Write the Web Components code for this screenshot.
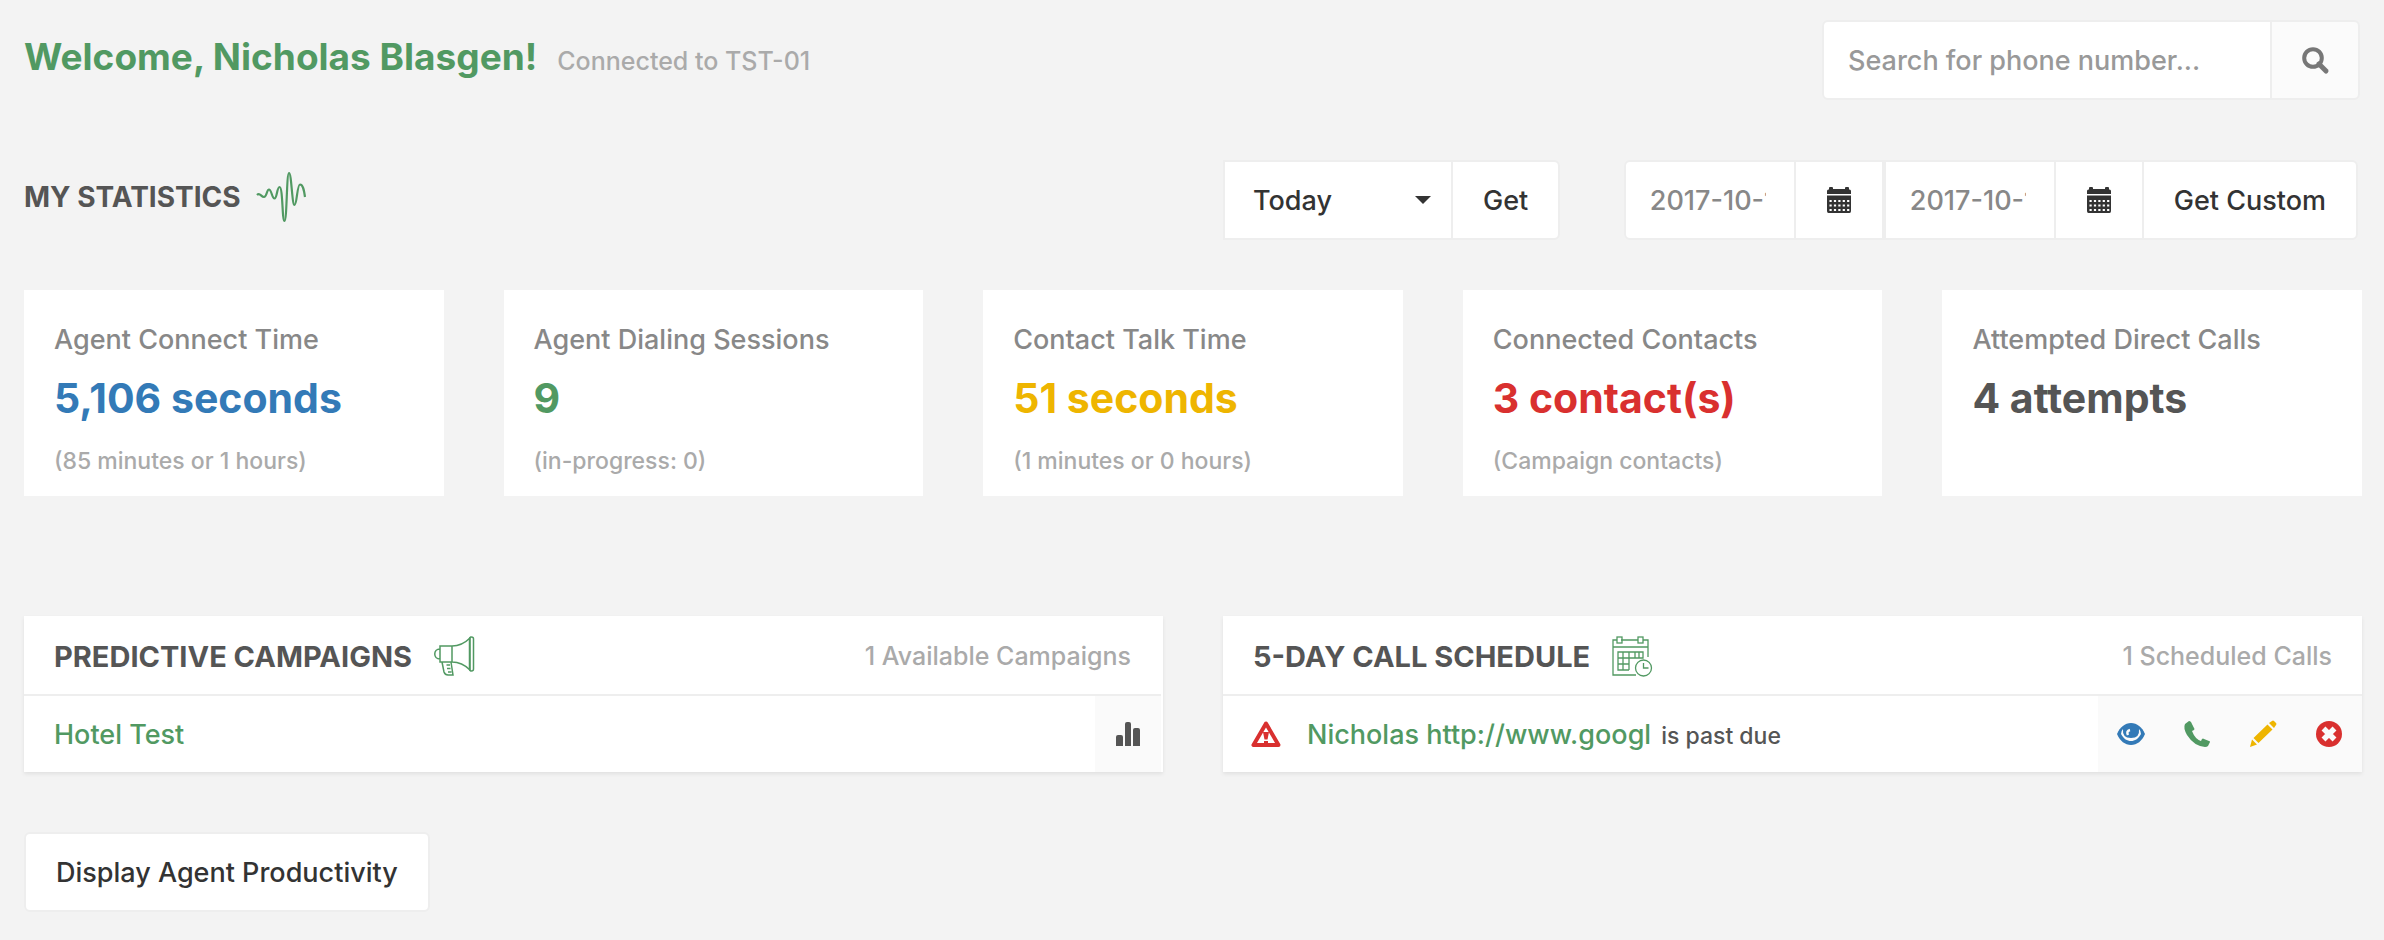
<!DOCTYPE html>
<html lang="en">
<head>
  <meta charset="utf-8">
  <meta name="viewport" content="width=device-width, initial-scale=1">
  <title>Agent Dashboard</title>
  <style>
    body {
      margin: 0;
      background: #f3f3f3;
      color: #555;
      font-family: Inter, "Open Sans", sans-serif;
      font-size: 27px;
      font-weight: 500;
      --green: #519962;
      --blue: #337ab7;
      --yellow: #eeb500;
      --red: #d9302f;
      --muted: #aaa;
      --line: #eee;
    }
  </style>
</head>
<body>
  <agent-dashboard></agent-dashboard>

  <script>
    const icons = {
      pulse: {
        box: '0 0 50 50',
        body: '<path d="M0 23C3 20 4 25 7 25S9.500 17.500 12 17.500 15 26.500 17.500 26.500 20 15 22.500 15C26 15 25 49 27.500 49S29.500 1 32 1 35 33 37.500 33 40 12.500 43 12.500C46 12.500 47 18 48 25" fill="none" stroke="currentColor" stroke-width="2.200"/>'
      },
      megaphone: {
        box: '0 0 40 40',
        body: '<g fill="none" stroke="currentColor" stroke-width="1.500"><path d="M6 10h12v16H6zM6 13C-1 13-1 23 6 23M18 10c7 0 14-4 18-8v32c-4-4-10-8-18-8M8 26l2 10q1 3 4 3h5l-2-13M12.500 29H16M13 32.500h3.500M14 36h3.500"/><rect x="35.500" y="1" width="4" height="34" rx="2"/></g>'
      },
      schedule: {
        box: '0 0 40 40',
        body: '<g fill="none" stroke="currentColor" stroke-width="1.300"><path d="M5 4H1v35h23M9 4h17M31 4h5v17M1 11h35M6 16h25v6H6zM11 16v18M17 16v18M23 16v6M27 16v6M6 22v12h11M6 28h11"/><rect x="5" y="1" width="5" height="6"/><rect x="26" y="1" width="5" height="6"/><circle cx="31.500" cy="32" r="8"/><path d="M31.500 27v5h5"/></g>'
      },
      search: {
        box: '0 0 26 26',
        body: '<g fill="none" stroke="currentColor"><circle cx="11" cy="11" r="8.800" stroke-width="4"/><path d="M17 17l7 7" stroke-width="5" stroke-linecap="round"/></g>'
      },
      calendar: {
        box: '0 0 26 26',
        body: '<path fill="currentColor" d="M1 7V4q0-1.500 1.500-1.500H3V1q0-1 1-1h2q1 0 1 1v1h12V1q0-1 1-1h2q1 0 1 1v1.500h.5Q25 2.500 25 4v3zM1 8.500h24V24q0 2-1.500 2h-21Q1 26 1 24z"/><path stroke="#fff" stroke-width="2.200" stroke-dasharray="2.200 2.200" d="M3.500 14h20M3.500 18.500h20M3.500 23h20"/>'
      },
      caret: {
        box: '0 0 16 8',
        body: '<path fill="currentColor" d="M0 0h16L8 8z"/>'
      },
      bars: {
        box: '0 0 24 24',
        body: '<path fill="currentColor" d="M0 24V15q0-2 2-2h3q2 0 2 2v9zM9 24V2q0-2 2-2h2q2 0 2 2v22zM17 24V8q0-2 2-2h3q2 0 2 2v16z"/>'
      },
      warning: {
        box: '0 0 30 26',
        body: '<path fill="none" stroke="currentColor" stroke-width="4" stroke-linejoin="round" d="M15 2.500L2.500 24h25z"/><path fill="currentColor" d="M12 11h6l-1.500 7.500h-3zM13 20h4v3h-4z"/>'
      },
      eye: {
        box: '0 0 28 22',
        body: '<path fill="currentColor" d="M14 0c6 0 11 4 14 11-3 7-8 11-14 11S3 18 0 11C3 4 8 0 14 0z"/><path fill="#fafafa" d="M6 6q-2 2-2 5c3 5 6 7 10 7s7-2 10-7q0-3-2-5 1 9-8 9T6 6z"/><path d="M13 7q-4 1-2 5" fill="none" stroke="#fafafa" stroke-width="2.500"/>'
      },
      phone: {
        box: '0 0 26 26',
        body: '<path fill="currentColor" d="M5 0L1 3q-2 4 2 11 7 11 18 12 2 0 3-1l2-4q0-1-1-1l-5-2q-1-1-2 0l-1 2q-6-2-9-10l2-1q1-1 0-2L7 1Q6 0 5 0z"/>'
      },
      pencil: {
        box: '0 0 26 26',
        body: '<path fill="currentColor" d="M22 0q1-1 2 0l2 2q1 1 0 2l-2 3-5-5zM17.500 3.500l5 5L8.500 22l-5-5zM2 18.500L7 23.500 0 26z"/>'
      },
      remove: {
        box: '0 0 26 26',
        body: '<circle cx="13" cy="13" r="13" fill="currentColor"/><path stroke="#fafafa" stroke-width="5.500" d="M7.500 7.500l11 11M18.500 7.500l-11 11"/>'
      }
    };

    class AppIcon extends HTMLElement {
      constructor() {
        super();
        this.attachShadow({ mode: 'open' });
      }

      connectedCallback() {
        const icon = icons[this.getAttribute('name')];
        const [, , width, height] = icon.box.split(' ');
        this.shadowRoot.innerHTML = `
          <style>
            :host { display: inline-flex; flex: none; }
            svg { display: block; overflow: visible; }
          </style>
          <svg viewBox="${icon.box}" width="${width}" height="${height}" aria-hidden="true">${icon.body}</svg>
        `;
      }
    }

    const controlStyles = `
      :host { display: flex; }
      input, select, button {
        box-sizing: border-box;
        height: 80px;
        margin: 0;
        border: 2px solid var(--line);
        border-radius: 0;
        background: #fff;
        color: #333;
        font: inherit;
      }
      button { padding: 0 30px; cursor: pointer; white-space: nowrap; }
      .join { margin-left: -2px; }
      .icon { display: flex; align-items: center; justify-content: center; width: 90px; padding: 0; }
      .first { border-radius: 6px 0 0 6px; }
      .last { border-radius: 0 6px 6px 0; }
    `;

    class PhoneSearch extends HTMLElement {
      constructor() {
        super();
        this.attachShadow({ mode: 'open' });
        this.shadowRoot.innerHTML = `
          <style>
            ${controlStyles}
            input { width: 450px; padding: 0 24px; }
            input::placeholder { color: #999; opacity: 1; }
            button { background: #fbfbfb; color: #777; }
          </style>
          <input class="first" type="search" placeholder="Search for phone number..." aria-label="Search for phone number">
          <button class="icon join last" type="button" aria-label="Search"><app-icon name="search"></app-icon></button>
        `;
      }
    }

    class PeriodPicker extends HTMLElement {
      constructor() {
        super();
        this.attachShadow({ mode: 'open' });
        this.shadowRoot.innerHTML = `
          <style>
            ${controlStyles}
            .select { display: grid; align-items: center; }
            .select > * { grid-area: 1 / 1; }
            select { appearance: none; width: 230px; padding: 0 28px; }
            app-icon { justify-self: end; margin-right: 22px; color: #333; pointer-events: none; }
          </style>
          <div class="select">
            <select aria-label="Period">
              <option>Today</option>
              <option>Yesterday</option>
              <option>This Week</option>
            </select>
            <app-icon name="caret"></app-icon>
          </div>
          <button class="join last" type="button">Get</button>
        `;
      }
    }

    class DateRange extends HTMLElement {
      constructor() {
        super();
        this.attachShadow({ mode: 'open' });
        this.shadowRoot.innerHTML = `
          <style>
            ${controlStyles}
            input { width: 172px; padding: 0 28px 0 24px; color: #888; }
          </style>
          <input class="first" type="text" value="2017-10-17" aria-label="From date">
          <button class="icon join" type="button" aria-label="Pick from date"><app-icon name="calendar"></app-icon></button>
          <input type="text" value="2017-10-17" aria-label="To date">
          <button class="icon join" type="button" aria-label="Pick to date"><app-icon name="calendar"></app-icon></button>
          <button class="join last" type="button">Get Custom</button>
        `;
      }
    }

    class StatCard extends HTMLElement {
      constructor() {
        super();
        this.attachShadow({ mode: 'open' });
        this.shadowRoot.innerHTML = `
          <style>
            :host { display: block; padding: 30px 30px 10px; background: #fff; }
            p { margin: 0; }
            .label { color: #888; line-height: 40px; }
            .value { color: var(--tone, #555); font-size: 41px; font-weight: 700; line-height: 76px; }
            .note { color: var(--muted); font-size: 23px; line-height: 50px; }
          </style>
          <p class="label"><slot name="label"></slot></p>
          <p class="value"><slot></slot></p>
          <p class="note"><slot name="note"></slot></p>
        `;
      }
    }

    class ListPanel extends HTMLElement {
      constructor() {
        super();
        this.attachShadow({ mode: 'open' });
        this.shadowRoot.innerHTML = `
          <style>
            :host { display: block; background: #fff; box-shadow: 0 2px 4px rgba(0, 0, 0, 0.08); }
            header {
              display: flex;
              align-items: center;
              height: 76px;
              padding: 2px 30px 0;
              border-bottom: 2px solid var(--line);
            }
            h2 { margin: 0 22px 0 0; font-size: 29px; font-weight: 700; text-transform: uppercase; }
            app-icon { color: var(--green); }
            .count { margin-left: auto; color: var(--muted); font-size: 25px; }
          </style>
          <header>
            <h2><slot name="title"></slot></h2>
            <app-icon name="${this.getAttribute('icon')}"></app-icon>
            <span class="count"><slot name="count"></slot></span>
          </header>
          <slot></slot>
        `;
      }
    }

    class PanelRow extends HTMLElement {
      constructor() {
        super();
        this.attachShadow({ mode: 'open' });
        this.shadowRoot.innerHTML = `
          <style>
            :host { display: flex; height: 76px; }
            .text { display: flex; flex: 1; align-items: center; padding: 0 30px; }
            .text ::slotted(app-icon) { margin: 0 26px 0 -2px; color: var(--red); }
            .actions { display: flex; background: #fafafa; }
            ::slotted(button) {
              display: flex;
              align-items: center;
              justify-content: center;
              width: 66px;
              padding: 0;
              border: 0;
              background: none;
              color: inherit;
              cursor: pointer;
            }
          </style>
          <div class="text"><slot></slot></div>
          <div class="actions"><slot name="action"></slot></div>
        `;
      }
    }

    class AgentDashboard extends HTMLElement {
      constructor() {
        super();
        this.attachShadow({ mode: 'open' });
        this.shadowRoot.innerHTML = `
          <style>
            :host { display: block; padding: 20px 22px 28px 24px; }
            h1, h2, p { margin: 0; }
            a { color: var(--green); text-decoration: none; }
            .top { display: flex; justify-content: space-between; padding-right: 2px; }
            .welcome { display: flex; align-items: baseline; gap: 20px; line-height: 74px; }
            h1 { color: var(--green); font-size: 37px; font-weight: 700; }
            .connected { color: var(--muted); font-size: 25px; }
            .halves { display: grid; grid-template-columns: 1fr 1fr; gap: 60px; }
            .stats-head { margin: 60px 0 50px; }
            .stats-title { display: flex; align-items: center; gap: 16px; height: 74px; }
            .stats-title h2 { font-size: 28px; font-weight: 700; text-transform: uppercase; }
            .stats-title app-icon { color: var(--green); }
            .filters { display: flex; justify-content: space-between; padding-right: 4px; }
            .cards { display: grid; grid-template-columns: repeat(5, 1fr); gap: 60px; }
            .panels { margin: 120px 0 60px; }
            .campaigns { padding-right: 2px; }
            .due { margin-left: 10px; font-size: 23px; }
            .baseline { display: flex; align-items: baseline; }
            .productivity {
              height: 80px;
              padding: 0 30px;
              border: 2px solid var(--line);
              border-radius: 6px;
              background: #fff;
              color: #333;
              font: inherit;
              cursor: pointer;
            }
            .blue { --tone: var(--blue); }
            .green { --tone: var(--green); }
            .yellow { --tone: var(--yellow); }
            .red { --tone: var(--red); }
            button.tone { color: var(--tone); }
          </style>

          <header class="top">
            <div class="welcome">
              <h1>Welcome, Nicholas Blasgen!</h1>
              <span class="connected">Connected to TST-01</span>
            </div>
            <phone-search></phone-search>
          </header>

          <section class="halves stats-head">
            <div class="stats-title">
              <h2>My Statistics</h2>
              <app-icon name="pulse"></app-icon>
            </div>
            <div class="filters">
              <period-picker></period-picker>
              <date-range></date-range>
            </div>
          </section>

          <section class="cards">
            <stat-card class="blue">
              <span slot="label">Agent Connect Time</span>5,106 seconds<span slot="note">(85 minutes or 1 hours)</span>
            </stat-card>
            <stat-card class="green">
              <span slot="label">Agent Dialing Sessions</span>9<span slot="note">(in-progress: 0)</span>
            </stat-card>
            <stat-card class="yellow">
              <span slot="label">Contact Talk Time</span>51 seconds<span slot="note">(1 minutes or 0 hours)</span>
            </stat-card>
            <stat-card class="red">
              <span slot="label">Connected Contacts</span>3 contact(s)<span slot="note">(Campaign contacts)</span>
            </stat-card>
            <stat-card>
              <span slot="label">Attempted Direct Calls</span>4 attempts
            </stat-card>
          </section>

          <section class="halves panels">
            <list-panel class="campaigns" icon="megaphone">
              <span slot="title">Predictive Campaigns</span>
              <span slot="count">1 Available Campaigns</span>
              <panel-row>
                <a href="#campaign">Hotel Test</a>
                <button slot="action" type="button" aria-label="Campaign statistics"><app-icon name="bars"></app-icon></button>
              </panel-row>
            </list-panel>
            <list-panel icon="schedule">
              <span slot="title">5-Day Call Schedule</span>
              <span slot="count">1 Scheduled Calls</span>
              <panel-row>
                <app-icon name="warning"></app-icon>
                <div class="baseline"><a href="#contact">Nicholas http://www.googl</a><span class="due">is past due</span></div>
                <button slot="action" class="tone blue" type="button" aria-label="View"><app-icon name="eye"></app-icon></button>
                <button slot="action" class="tone green" type="button" aria-label="Call"><app-icon name="phone"></app-icon></button>
                <button slot="action" class="tone yellow" type="button" aria-label="Edit"><app-icon name="pencil"></app-icon></button>
                <button slot="action" class="tone red" type="button" aria-label="Delete"><app-icon name="remove"></app-icon></button>
              </panel-row>
            </list-panel>
          </section>

          <button class="productivity" type="button">Display Agent Productivity</button>
        `;
      }
    }

    customElements.define('app-icon', AppIcon);
    customElements.define('phone-search', PhoneSearch);
    customElements.define('period-picker', PeriodPicker);
    customElements.define('date-range', DateRange);
    customElements.define('stat-card', StatCard);
    customElements.define('list-panel', ListPanel);
    customElements.define('panel-row', PanelRow);
    customElements.define('agent-dashboard', AgentDashboard);
  </script>
</body>
</html>
